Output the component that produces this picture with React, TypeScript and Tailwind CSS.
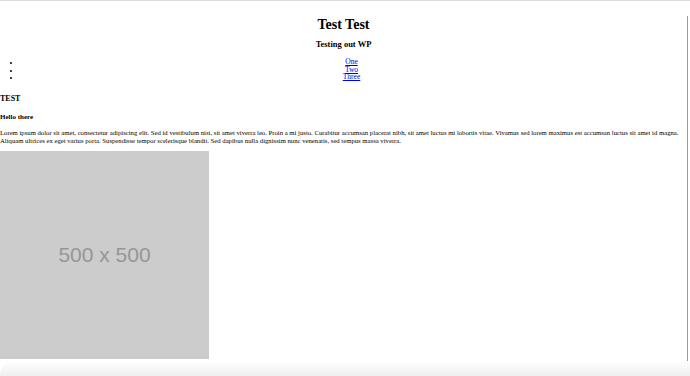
export default function App() {
  const serif = { fontFamily: '"Liberation Serif", "Times New Roman", serif' };

  return (
    <div
      className="relative w-[690px] h-[376px] overflow-hidden bg-white border-t border-[#dcdcdc]"
      style={serif}
    >
      <div className="w-[688px] h-full border-r border-[#9a9a9a] text-black">
        <h1 className="mt-[15px] text-center text-[14px] leading-[18px] font-bold">
          Test Test
        </h1>
        <h3 className="mt-[5px] text-center text-[8.5px] leading-[10px] font-bold">
          Testing out WP
        </h3>
        <ul className="mt-[9px] pl-[20px] pr-[4px] list-disc text-center text-[7.5px] leading-[7.5px] marker:text-[6px]">
          <li>
            <a href="#" className="text-[#0000ee] underline">
              One
            </a>
          </li>
          <li>
            <a href="#" className="text-[#0000ee] underline">
              Two
            </a>
          </li>
          <li>
            <a href="#" className="text-[#0000ee] underline">
              Three
            </a>
          </li>
        </ul>
        <h2 className="mt-[13px] text-[8px] leading-[10px] font-bold">TEST</h2>
        <h4 className="mt-[9px] text-[7px] leading-[8px] font-bold">
          Hello there
        </h4>
        <p className="mt-[8px] text-[6.7px] leading-[8px]">
          Lorem ipsum dolor sit amet, consectetur adipiscing elit. Sed id
          vestibulum nisi, sit amet viverra leo. Proin a mi justo. Curabitur
          accumsan placerat nibh, sit amet luctus mi lobortis vitae. Vivamus sed
          lorem maximus est accumsan luctus sit amet id magna. Aliquam ultrices
          ex eget varius porta. Suspendisse tempor scelerisque blandit. Sed
          dapibus nulla dignissim nunc venenatis, sed tempus massa viverra.
        </p>
        <div className="mt-[6px] w-[209px] h-[208px] bg-[#cccccc] flex items-center justify-center">
          <span
            className="text-[21px] text-[#969696]"
            style={{ fontFamily: '"Liberation Sans", Arial, sans-serif' }}
          >
            500 x 500
          </span>
        </div>
      </div>
      <div className="absolute left-0 right-0 bottom-0 h-[15px] rounded-tl-[14px] bg-gradient-to-b from-white to-[#efefef]" />
    </div>
  );
}
